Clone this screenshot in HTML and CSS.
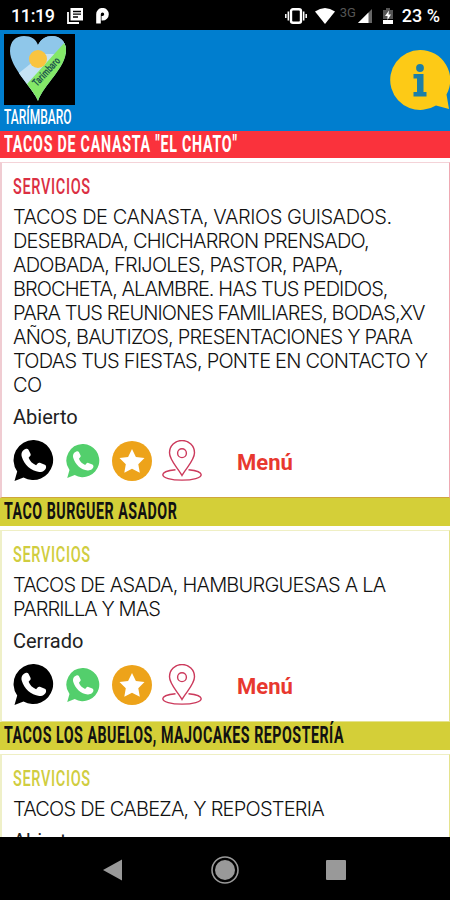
FILE: index.html
```html
<!DOCTYPE html>
<html lang="es">
<head>
  <meta charset="utf-8">
  <meta name="viewport" content="width=device-width,initial-scale=1.0">
  <title>Tarímbaro</title>
  <link rel="stylesheet" href="styles.css">
</head>

<body>
  <!-- shared icons -->
  <svg class="defs" width="0" height="0">
    <symbol id="ic-phone" viewBox="0 0 41 41">
      <path d="M21 0a20 20 0 1 1-10.500 37.500L1.500 41l2.700-9.500A20 20 0 0 1 21 0z" fill="currentColor"/>
      <path d="M12.500 9c-3.200 1-4.700 4.200-3.700 7.800 2.200 7.700 9.200 14.400 17.400 15.100 3.700.2 6.900-2 6.900-5 0-1-.5-1.700-1.300-2.100l-4.900-2c-.9-.3-1.700 0-2.300.8l-1.500 1.700c-3.700-1.600-6.200-4.200-7.500-7.500l1.500-1.700c.6-.7.8-1.400.5-2.200l-2.100-4.200c-.5-.8-1.700-1.100-3-.7z" fill="#fff"/>
    </symbol>
    <symbol id="ic-star" viewBox="0 0 40 40">
      <circle cx="20" cy="20" r="20" fill="#eda31a"/>
      <path d="M20 8l3.900 7.900 8.600 1.200-6.200 6.100 1.500 8.600-7.800-4-7.700 4 1.500-8.600-6.300-6.100 8.600-1.200z" fill="#fff"/>
    </symbol>
    <symbol id="ic-pin" viewBox="0 0 40 41">
      <g fill="none" stroke="#cc3a5c" stroke-width="1.400">
        <path d="M20 35.500C16 28 7.500 20.500 7.500 12.800a12.500 12.300 0 0 1 25 0C32.500 20.500 24 28 20 35.500z"/>
        <circle cx="20" cy="13.200" r="4.400"/>
        <path d="M13.500 29.700C5 30.500 .8 32.700 .8 34.800c0 3 8 5.300 19.200 5.300s19.200-2.300 19.200-5.300c0-2.100-4.200-4.300-12.700-5.100"/>
      </g>
    </symbol>
  </svg>

  <div class="statusbar">
    <span class="clock">11:19</span>
    <svg class="st-news" width="16" height="16" viewBox="0 0 16 16">
      <path d="M1 4v11h11" fill="none" stroke="#fff" stroke-width="1.800"/>
      <path d="M3.500 0H16v12.500H3.500z" fill="#fff"/>
      <path d="M6 3.500h8M6 6.200h8M6 9h5" stroke="#000" stroke-width="1.300"/>
    </svg>
    <svg class="st-p" width="13" height="16" viewBox="0 0 13 16">
      <path d="M2.500 15.500V6.200a4 4 0 1 1 4 4H5.500" fill="none" stroke="#fff" stroke-width="4.600"/>
    </svg>
    <svg class="st-vib" width="22" height="16" viewBox="0 0 22 16">
      <rect x="6" y="1.200" width="10" height="13.600" rx="2" fill="none" stroke="#fff" stroke-width="2.400"/>
      <path d="M3.300 3.500v9M18.700 3.500v9M.8 6v4M21.200 6v4" stroke="#fff" stroke-width="1.500"/>
    </svg>
    <svg class="st-wifi" width="20" height="16" viewBox="0 0 20 16">
      <path d="M0 3.500Q10-3.500 20 3.500L10 16z" fill="#fff"/>
    </svg>
    <span class="net">3G</span>
    <svg class="st-sig" width="14" height="14" viewBox="0 0 14 14">
      <path d="M14 0v14H0z" fill="#666"/>
      <path d="M10.500 3.500V14H0z" fill="#fff"/>
    </svg>
    <svg class="st-bat" width="10" height="16" viewBox="0 0 10 16">
      <path d="M3 0h4v2h3v9H0V2h3z" fill="#555"/>
      <path d="M0 12h10v4H0z" fill="#fff"/>
      <path d="M6 2.500L2 8h2.500v4L8 6.500H5.500z" fill="#fff"/>
    </svg>
    <span class="pct">23 %</span>
  </div>

  <div class="header">
    <div class="brand">
      <svg class="logo" width="71" height="71" viewBox="0 0 71 71">
        <defs>
          <clipPath id="heart">
            <path d="M34 67C29 54 6 34 6 17 6 7 12 2 20 2c7 0 12 3 14 9 3-6 8-9 14-9 8 0 14 6 14 14 0 18-22 34-28 51z"/>
          </clipPath>
        </defs>
        <rect width="71" height="71" fill="#000"/>
        <g clip-path="url(#heart)">
          <rect width="71" height="71" fill="#8fc7ea"/>
          <path d="M0 51L71-6V0L24 71H0z" fill="#c5e2f4"/>
          <path d="M34 0h37v20H34z" fill="#8fc7ea"/>
          <path d="M14 60L62 7v64H14z" fill="#84e868"/>
          <circle cx="34" cy="25" r="9" fill="#f9c440"/>
        </g>
        <text class="logo-text" transform="translate(33 53) rotate(-47)" textLength="35" lengthAdjust="spacingAndGlyphs">Tarímbaro</text>
      </svg>
      <span class="town">TARÍMBARO</span>
    </div>
    <svg class="info" width="60" height="61" viewBox="0 0 60 61">
      <path d="M30 0a30 30 0 0 1 26.500 44.500L59 59l-13-3.500A30 30 0 1 1 30 0z" fill="#fdca16"/>
      <circle cx="30" cy="18" r="3.900" fill="#1c7fa8"/>
      <path d="M23.500 24h10v18h3v4.500h-13V42H27V28.500h-3.500z" fill="#1c7fa8"/>
    </svg>
  </div>

  <div class="list">
    <div class="title red"><span>TACOS DE CANASTA "EL CHATO"</span></div>
    <div class="card card-red">
      <h2><span>SERVICIOS</span></h2>
      <p class="desc">
        <span class="loose">TACOS DE CANASTA, VARIOS GUISADOS.</span><br>
        DESEBRADA, CHICHARRON PRENSADO,<br>
        ADOBADA, FRIJOLES, PASTOR, PAPA,<br>
        <span class="tight">BROCHETA, ALAMBRE. HAS TUS PEDIDOS,</span><br>
        <span class="tight">PARA TUS REUNIONES FAMILIARES, BODAS,XV</span><br>
        AÑOS, BAUTIZOS, PRESENTACIONES Y PARA<br>
        TODAS TUS FIESTAS, PONTE EN CONTACTO Y<br>
        <span class="loose">CO</span>
      </p>
      <p class="state">Abierto</p>
      <div class="actions">
        <svg class="call"><use href="#ic-phone"/></svg>
        <svg class="whats"><use href="#ic-phone"/></svg>
        <svg class="star"><use href="#ic-star"/></svg>
        <svg class="pin"><use href="#ic-pin"/></svg>
        <a class="menu">Menú</a>
      </div>
    </div>

    <div class="title"><span>TACO BURGUER ASADOR</span></div>
    <div class="card">
      <h2><span>SERVICIOS</span></h2>
      <p class="desc">
        TACOS DE ASADA, HAMBURGUESAS A LA<br>
        <span class="tight">PARRILLA Y MAS</span>
      </p>
      <p class="state">Cerrado</p>
      <div class="actions">
        <svg class="call"><use href="#ic-phone"/></svg>
        <svg class="whats"><use href="#ic-phone"/></svg>
        <svg class="star"><use href="#ic-star"/></svg>
        <svg class="pin"><use href="#ic-pin"/></svg>
        <a class="menu">Menú</a>
      </div>
    </div>

    <div class="title"><span>TACOS LOS ABUELOS, MAJOCAKES REPOSTERÍA</span></div>
    <div class="card">
      <h2><span>SERVICIOS</span></h2>
      <p class="desc">TACOS DE CABEZA, Y REPOSTERIA</p>
      <p class="state">Abierto</p>
    </div>
  </div>

  <div class="navbar">
    <svg width="20" height="22" viewBox="0 0 20 22"><path d="M0 11L19 .5v21z" fill="#999"/></svg>
    <svg width="28" height="28" viewBox="0 0 28 28">
      <circle cx="14" cy="14" r="13" fill="none" stroke="#999" stroke-width="1.600"/>
      <circle cx="14" cy="14" r="10" fill="#999"/>
    </svg>
    <svg width="20" height="20" viewBox="0 0 20 20"><rect width="20" height="20" rx="1" fill="#999"/></svg>
  </div>
</body>
</html>
```
FILE: styles.css
```css
* {
  box-sizing: border-box;
}

body {
  display: flex;
  flex-direction: column;
  width: 450px;
  height: 900px;
  margin: 0;
  overflow: hidden;
  background: #fff;
  color: #111;
  font-family: Roboto, "Liberation Sans", sans-serif;
}

svg {
  display: block;
  flex: none;
}

.defs {
  position: absolute;
}

/* phone status bar */
.statusbar {
  display: flex;
  align-items: center;
  flex: none;
  height: 30px;
  padding: 1px 10px 0 11px;
  background: #000;
  color: #fff;
  font-size: 18px;
  font-weight: 500;
  white-space: nowrap;
}

.clock {
  width: 56px;
  letter-spacing: -.4px;
}

.st-p {
  margin-left: 13px;
}

.st-vib {
  margin-left: auto;
}

.st-wifi {
  margin-left: 8px;
}

.net {
  margin: -6px 2px 0 5px;
  color: #555;
  font-size: 13px;
  font-weight: 400;
}

.st-bat {
  margin-left: 11px;
}

.pct {
  margin-left: 9px;
}

/* blue header */
.header {
  display: flex;
  justify-content: space-between;
  flex: none;
  height: 101px;
  padding: 4px 0 0 4px;
  background: #007ecf;
}

.town {
  display: block;
  height: 24px;
  line-height: 25px;
  color: #fff;
  font-size: 20px;
  font-weight: 500;
  white-space: nowrap;
  transform: scaleX(.6);
  transform-origin: 0 0;
}

.brand {
  width: 71px;
}

.logo-text {
  fill: #21584d;
  font-size: 11px;
  font-weight: 700;
}

.info {
  margin-top: 16px;
}

/* business list */
.list {
  flex: 1;
  min-height: 0;
  overflow: hidden;
}

.title {
  height: 28px;
  margin-bottom: 4px;
  padding-left: 4px;
  background: #d4cf38;
  color: #111;
  font-size: 23px;
  font-weight: 700;
  line-height: 28px;
  letter-spacing: .8px;
  white-space: nowrap;
}

.title.red {
  height: 27px;
  line-height: 27px;
  letter-spacing: 1.2px;
  background: #fa323c;
  color: #fff;
}

.title span {
  display: inline-block;
  transform: scaleX(.62);
  transform-origin: 0 0;
}

.card {
  padding: 12px 0 16px 11px;
  border: 1px solid #e5e38e;
  border-top-color: #efefc4;
  border-left: 2px solid #eff0c8;
}

.card-red {
  border-color: #f4d3d8 #efa9b3 #d0a63c #f0ccd2;
}

.card h2 {
  height: 24px;
  margin: 0 0 6px;
  color: #d0cd40;
  font-size: 22px;
  font-weight: 500;
  line-height: 24px;
  letter-spacing: 1px;
}

.card h2 span {
  display: inline-block;
  transform: scaleX(.66);
  transform-origin: 0 0;
}

.card-red h2 {
  color: #db2f43;
}

.desc {
  margin: 0 0 8px;
  font-family: Inter, sans-serif;
  font-size: 20px;
  font-weight: 300;
  line-height: 24px;
  letter-spacing: -.78px;
  white-space: nowrap;
}

.desc .loose {
  letter-spacing: -.46px;
}

.desc .tight {
  letter-spacing: -.93px;
}

.state {
  margin: 0 0 11px;
  color: #222;
  font-size: 20px;
  line-height: 24px;
}

.actions {
  display: flex;
  align-items: center;
  height: 41px;
}

.call {
  width: 41px;
  height: 41px;
  color: #000;
}

.whats {
  width: 34px;
  height: 34px;
  margin-left: 12px;
  color: #53cf6c;
}

.star {
  width: 40px;
  height: 40px;
  margin-left: 12px;
}

.pin {
  width: 40px;
  height: 41px;
  margin-left: 10px;
}

.menu {
  margin: 4px 0 0 35px;
  color: #e8382f;
  font-size: 22px;
  font-weight: 700;
}

/* android buttons */
.navbar {
  display: flex;
  align-items: center;
  justify-content: space-between;
  flex: none;
  height: 63px;
  padding: 3px 104px 0 103px;
  background: #000;
}
```
